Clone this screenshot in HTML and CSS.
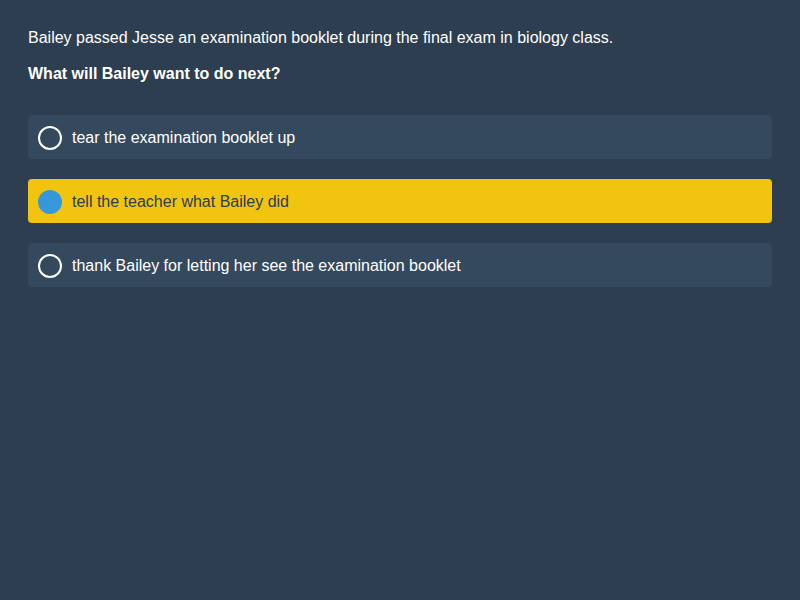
FILE: index.html
```html
<!DOCTYPE html>
<html>
<head>
<meta charset="utf-8">
<link rel="stylesheet" href="styles.css">
</head>
<body>
<main class="quiz">
  <p class="context">Bailey passed Jesse an examination booklet during the final exam in biology class.</p>
  <p class="question">What will Bailey want to do next?</p>
  <div class="options">
    <div class="option"><span class="radio"></span><span class="label">tear the examination booklet up</span></div>
    <div class="option selected"><span class="radio"></span><span class="label">tell the teacher what Bailey did</span></div>
    <div class="option"><span class="radio"></span><span class="label">thank Bailey for letting her see the examination booklet</span></div>
  </div>
</main>
</body>
</html>
```
FILE: styles.css
```css
html, body {
  margin: 0;
  padding: 0;
  background: #2c3e50;
  height: 100%;
}
body {
  font-family: "Liberation Sans", Arial, sans-serif;
  font-size: 16px;
  color: #ffffff;
}
.quiz {
  padding: 28px 28px;
}
.context {
  margin: 0;
  line-height: 20px;
}
.question {
  margin: 16px 0 0;
  font-weight: bold;
  line-height: 20px;
}
.options {
  margin-top: 31px;
  display: flex;
  flex-direction: column;
  gap: 20px;
}
.option {
  display: flex;
  align-items: center;
  gap: 10px;
  padding: 11px 10px 9px;
  background: #34495e;
  border-radius: 4px;
}
.radio {
  width: 24px;
  height: 24px;
  box-sizing: border-box;
  border: 2px solid #ffffff;
  border-radius: 50%;
  flex: none;
}
.option.selected {
  background: #f1c40f;
  color: #2c3e50;
}
.option.selected .radio {
  background: #3498db;
  border-color: #3498db;
}
.label {
  line-height: 20px;
}
```
